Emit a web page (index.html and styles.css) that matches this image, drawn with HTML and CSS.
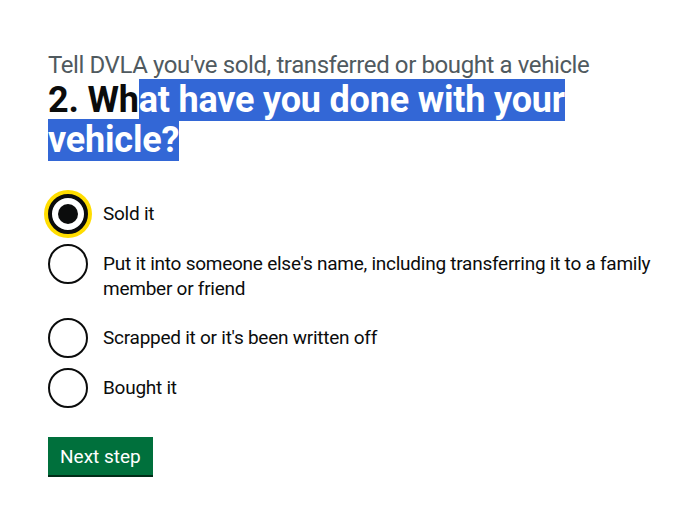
FILE: index.html
```html
<!DOCTYPE html>
<html lang="en">
<head>
    <meta charset="UTF-8">
    <title>What have you done with your vehicle? - Tell DVLA</title>
    <link rel="stylesheet" href="styles.css">
</head>
<body>
    <main class="main-wrapper">
        <form class="question-form">
            <fieldset class="fieldset">
                <legend class="legend">
                    <span class="caption">Tell DVLA you've sold, transferred or bought a vehicle</span>
                    <h1 class="heading">2. Wh<span class="selected">at have you done with your vehicle?</span></h1>
                </legend>
                <div class="radios">
                    <div class="radio-item">
                        <input class="radio-input is-focused" id="sold" name="action" type="radio" value="sold" checked>
                        <label class="radio-label" for="sold">Sold it</label>
                    </div>
                    <div class="radio-item">
                        <input class="radio-input" id="transferred" name="action" type="radio" value="transferred">
                        <label class="radio-label" for="transferred">Put it into someone else's name, including transferring it to a family member or friend</label>
                    </div>
                    <div class="radio-item">
                        <input class="radio-input" id="scrapped" name="action" type="radio" value="scrapped">
                        <label class="radio-label" for="scrapped">Scrapped it or it's been written off</label>
                    </div>
                    <div class="radio-item">
                        <input class="radio-input" id="bought" name="action" type="radio" value="bought">
                        <label class="radio-label" for="bought">Bought it</label>
                    </div>
                </div>
            </fieldset>
            <button class="button" type="submit">Next step</button>
        </form>
    </main>
</body>
</html>
```

FILE: styles.css
```css
body {
    margin: 0;
    font-family: Roboto, "Noto Sans", Arial, sans-serif;
    color: #0b0c0c;
    background: #fff;
}

.main-wrapper {
    padding: 50px 30px 40px 48px;
}

.fieldset {
    margin: 0;
    padding: 0;
    border: 0;
}

.legend {
    padding: 0;
    margin-bottom: 34px;
}

.caption {
    display: block;
    font-size: 24px;
    line-height: 30px;
    color: #505a5f;
    letter-spacing: -0.4px;
}

.heading {
    margin: 0;
    font-size: 36px;
    line-height: 40px;
    font-weight: 700;
    letter-spacing: -0.2px;
}

.selected {
    background: #3367d6;
    color: #fff;
}

.radio-item {
    position: relative;
    display: flex;
    min-height: 40px;
    margin-bottom: 10px;
    padding-left: 40px;
}

.radio-input {
    position: absolute;
    top: 0;
    left: 0;
    width: 40px;
    height: 40px;
    margin: 0;
    appearance: none;
    border: 2px solid #0b0c0c;
    border-radius: 50%;
    background: #fff;
    box-sizing: border-box;
}

.radio-input:checked::before {
    content: "";
    position: absolute;
    top: 8px;
    left: 8px;
    width: 20px;
    height: 20px;
    border-radius: 50%;
    background: #0b0c0c;
}

.radio-input.is-focused {
    border-width: 4px;
    box-shadow: 0 0 0 4px #ffdd00;
}

.radio-input.is-focused:checked::before {
    top: 6px;
    left: 6px;
}

.radio-label {
    padding: 7px 15px;
    font-size: 19px;
    line-height: 25px;
    letter-spacing: -0.25px;
}

.button {
    margin-top: 19px;
    padding: 8px 12px 7px;
    font-family: inherit;
    font-size: 19px;
    line-height: 23px;
    color: #fff;
    background: #00703c;
    border: 0;
    border-radius: 0;
    box-shadow: 0 2px 0 #002d18;
    cursor: pointer;
}
```
